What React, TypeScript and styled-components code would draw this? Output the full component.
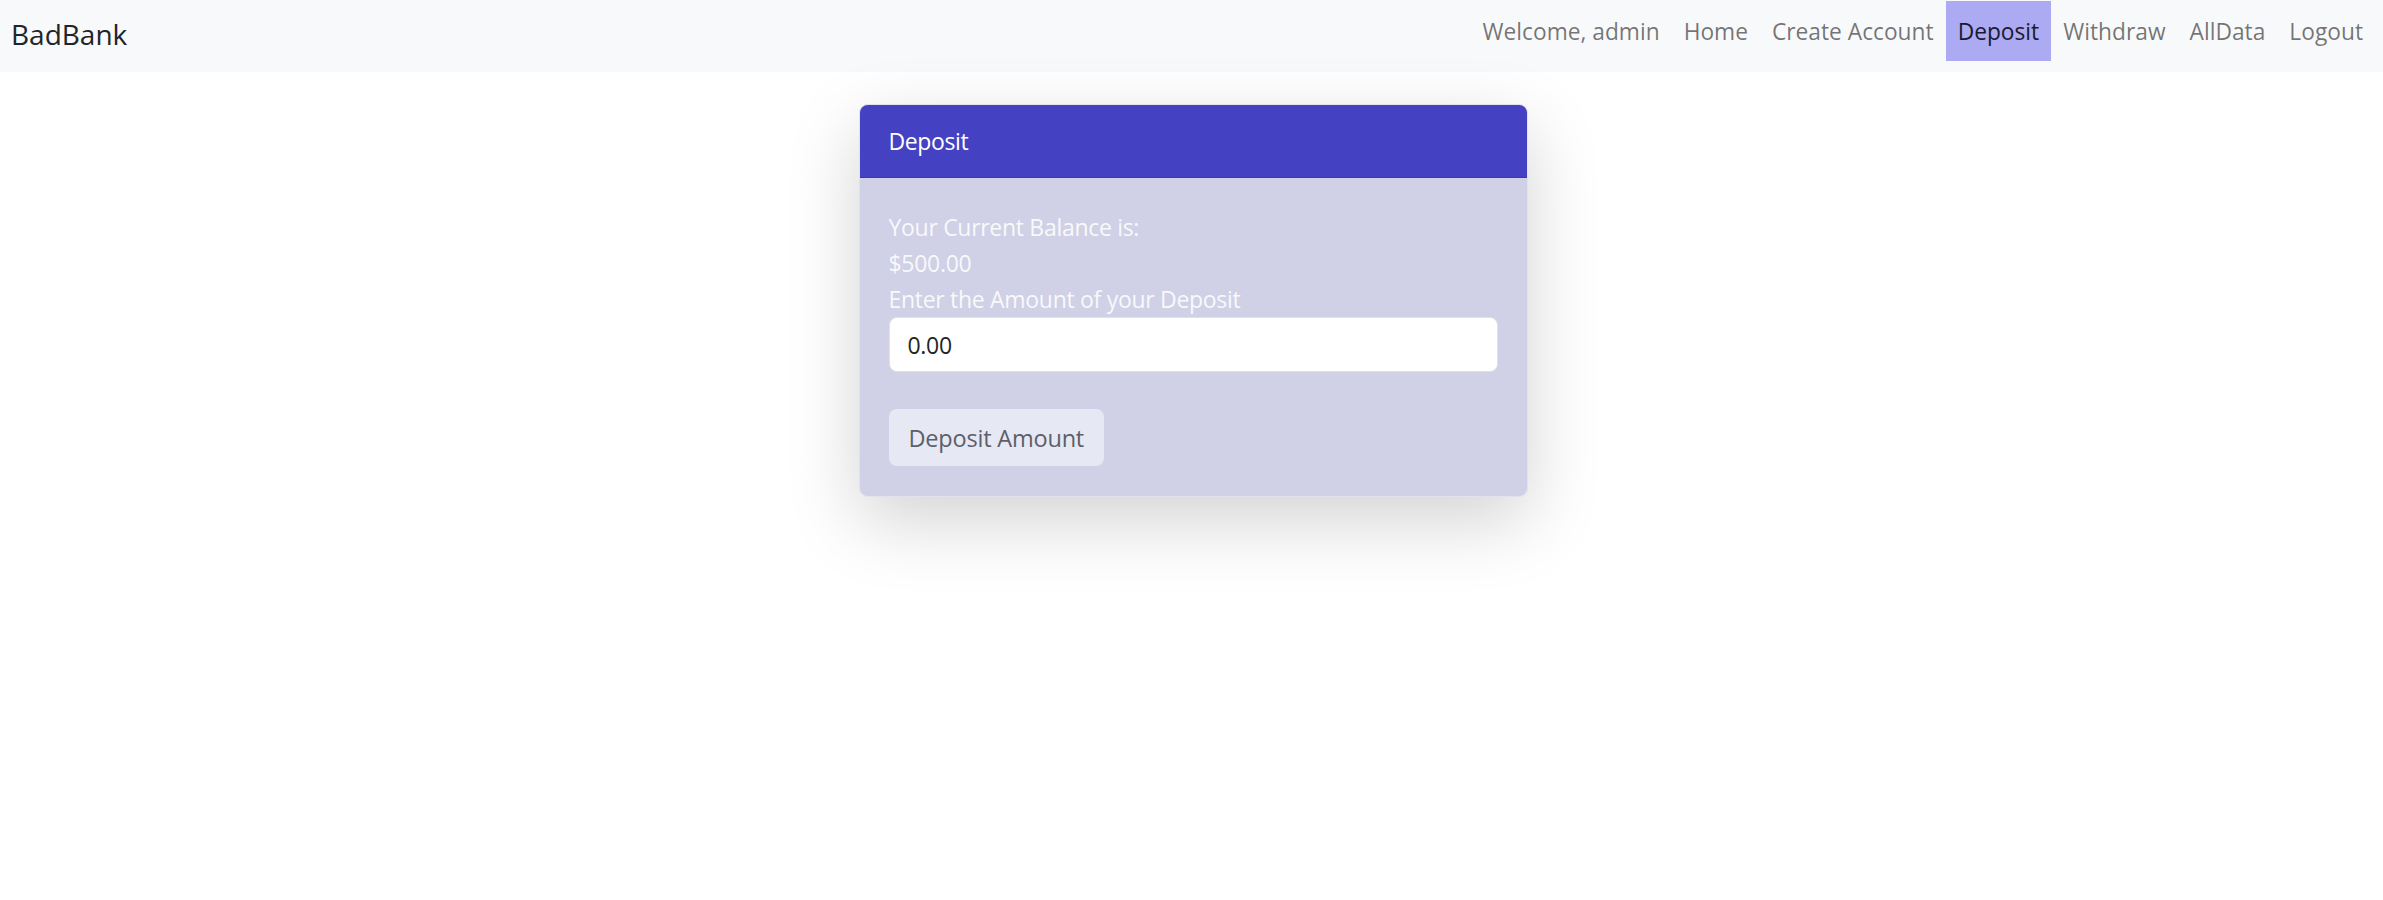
import React from "react";
import styled, { createGlobalStyle } from "styled-components";

const GlobalStyle = createGlobalStyle`
  html, body {
    margin: 0;
    padding: 0;
    background: #ffffff;
    font-family: "Open Sans", "Noto Sans", sans-serif;
  }
  * { box-sizing: border-box; }
`;

const NavBar = styled.nav`
  height: 72px;
  background: #f8f9fa;
  display: flex;
  align-items: center;
  justify-content: space-between;
  padding: 0 8px 0 11px;
`;

const Brand = styled.a`
  font-size: 28px;
  color: #212529;
  text-decoration: none;
  line-height: 1;
  margin-top: -4px;
`;

const NavList = styled.div`
  display: flex;
  align-items: center;
  height: 60px;
  margin-top: -10px;
`;

const NavLink = styled.a<{ $active?: boolean }>`
  display: flex;
  align-items: center;
  height: 60px;
  padding: 0 12px;
  font-size: 22.75px;
  color: ${(p) => (p.$active ? "#1a1a2e" : "rgba(0, 0, 0, 0.55)")};
  background: ${(p) => (p.$active ? "#abaaf3" : "transparent")};
  text-decoration: none;
  cursor: pointer;
`;

const Page = styled.main`
  padding: 32px 0 160px 3px;
`;

const Card = styled.section`
  width: 669px;
  margin: 0 auto;
  border: 1px solid #e2e2ea;
  border-radius: 9px;
  overflow: hidden;
  background: #d0d0e6;
  box-shadow: 0 24px 72px rgba(0, 0, 0, 0.175);
`;

const CardHeader = styled.header`
  height: 73px;
  display: flex;
  align-items: center;
  padding: 0 29px;
  background: #4441c2;
  border-bottom: 1px solid #3b38a8;
  color: #ffffff;
  font-size: 23px;
  letter-spacing: -0.4px;
`;

const CardBody = styled.div`
  padding: 31px 29px 30px;
  color: #f8f9fa;
  font-size: 23px;
  letter-spacing: -0.3px;
  line-height: 36px;
`;

const Line = styled.div``;

const AmountInput = styled.input`
  display: block;
  width: 100%;
  height: 55px;
  margin-top: 0;
  padding: 0 18px;
  border: 1px solid #dee2e6;
  border-radius: 8px;
  background: #ffffff;
  font-family: inherit;
  font-size: 23px;
  letter-spacing: -0.3px;
  color: #212529;
  outline: none;
`;

const SubmitButton = styled.button`
  display: block;
  margin-top: 37px;
  height: 57px;
  padding: 0 20px;
  border: none;
  border-radius: 8px;
  background: #e6e8f3;
  color: #5c6069;
  font-family: inherit;
  font-size: 23.5px;
  letter-spacing: -0.2px;
  cursor: pointer;
`;

export default function App() {
  const links = ["Welcome, admin", "Home", "Create Account", "Deposit", "Withdraw", "AllData", "Logout"];
  return (
    <>
      <GlobalStyle />
      <NavBar>
        <Brand href="#">BadBank</Brand>
        <NavList>
          {links.map((l) => (
            <NavLink key={l} $active={l === "Deposit"}>
              {l}
            </NavLink>
          ))}
        </NavList>
      </NavBar>
      <Page>
        <Card>
          <CardHeader>Deposit</CardHeader>
          <CardBody>
            <Line>Your Current Balance is:</Line>
            <Line>$500.00</Line>
            <Line>Enter the Amount of your Deposit</Line>
            <AmountInput defaultValue="0.00" />
            <SubmitButton>Deposit Amount</SubmitButton>
          </CardBody>
        </Card>
      </Page>
    </>
  );
}
